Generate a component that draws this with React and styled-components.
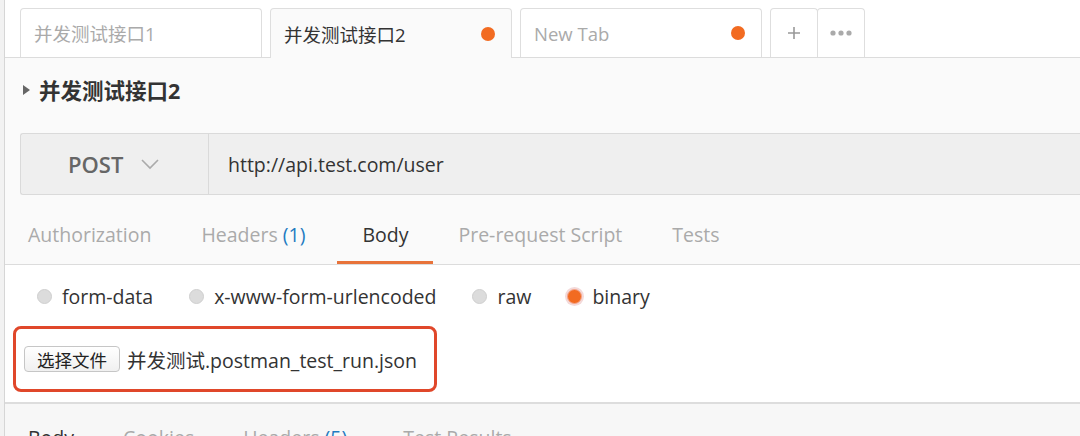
import styled, { createGlobalStyle } from 'styled-components';

const GlobalStyle = createGlobalStyle`
  html, body {
    margin: 0;
    padding: 0;
    background: #f2f2f2;
    font-family: "Open Sans", "Noto Sans CJK SC", sans-serif;
  }
`;

const requestTabs = [
  { label: 'Authorization' },
  { label: 'Headers', count: 1 },
  { label: 'Body', active: true },
  { label: 'Pre-request Script' },
  { label: 'Tests' },
];

const bodyModes = [
  { label: 'form-data' },
  { label: 'x-www-form-urlencoded' },
  { label: 'raw' },
  { label: 'binary', checked: true },
];

const responseTabs = [
  { label: 'Body', active: true },
  { label: 'Cookies' },
  { label: 'Headers', count: 5 },
  { label: 'Test Results' },
];

const App = () => {
  return (
    <>
      <GlobalStyle />
      <Page>
        {/* 상단 탭 */}
        <TabBar>
          <Tab>
            <TabTitle>并发测试接口1</TabTitle>
          </Tab>
          <Tab active>
            <TabTitle active>并发测试接口2</TabTitle>
            <Dot />
          </Tab>
          <Tab>
            <TabTitle>New Tab</TabTitle>
            <Dot />
          </Tab>
          <IconTabs>
            <IconTab>
              <svg width="14" height="14" viewBox="0 0 14 14">
                <path d="M7 1v12M1 7h12" stroke="#999" strokeWidth="1.6" />
              </svg>
            </IconTab>
            <IconTab>
              <svg width="24" height="8" viewBox="0 0 24 8">
                <circle cx="4" cy="4" r="2.6" fill="#aaa" />
                <circle cx="12" cy="4" r="2.6" fill="#aaa" />
                <circle cx="20" cy="4" r="2.6" fill="#aaa" />
              </svg>
            </IconTab>
          </IconTabs>
        </TabBar>

        <Builder>
          <TitleRow>
            <Caret />
            <RequestName>并发测试接口2</RequestName>
          </TitleRow>

          <UrlBar>
            <Method>
              POST
              <svg width="20" height="12" viewBox="0 0 20 12">
                <path d="M2 2l8 8 8-8" stroke="#aaa" strokeWidth="1.6" fill="none" />
              </svg>
            </Method>
            <UrlText>http://api.test.com/user</UrlText>
          </UrlBar>

          <SubTabs>
            {requestTabs.map((t) => (
              <SubTab key={t.label} active={t.active}>
                {t.label}
                {t.count !== undefined && <Count> ({t.count})</Count>}
              </SubTab>
            ))}
          </SubTabs>
        </Builder>

        <BodyPanel>
          <RadioRow>
            {bodyModes.map((m) => (
              <RadioItem key={m.label}>
                <Radio checked={m.checked} />
                {m.label}
              </RadioItem>
            ))}
          </RadioRow>
          <Highlight>
            <FileButton>选择文件</FileButton>
            <FileName>并发测试.postman_test_run.json</FileName>
          </Highlight>
        </BodyPanel>

        <Response>
          {responseTabs.map((t) => (
            <ResponseTab key={t.label} active={t.active}>
              {t.label}
              {t.count !== undefined && <Count> ({t.count})</Count>}
            </ResponseTab>
          ))}
        </Response>
      </Page>
    </>
  );
};

export default App;

const Page = styled.div`
  margin-left: 4px;
  border-left: 1px solid #d6d6d6;
  height: 436px;
  overflow: hidden;
  display: flex;
  flex-direction: column;
  background: #fafafa;

  & > * {
    flex-shrink: 0;
  }
`;

const TabBar = styled.div`
  height: 58px;
  box-sizing: border-box;
  display: flex;
  align-items: flex-end;
  gap: 8px;
  padding-left: 15px;
  background: #ffffff;
  border-bottom: 1px solid #dcdcdc;
`;

const Tab = styled.div`
  width: 242px;
  box-sizing: border-box;
  display: flex;
  align-items: center;
  justify-content: space-between;
  padding: 0 16px 0 13px;
  border: 1px solid #dedede;
  border-bottom: none;
  border-radius: 4px 4px 0 0;
  background: ${(props) => (props.active ? '#fafafa' : '#ffffff')};
  margin-bottom: ${(props) => (props.active ? '-1px' : '0')};
  height: ${(props) => (props.active ? '50px' : '49px')};
`;

const TabTitle = styled.span`
  font-size: 18.5px;
  color: ${(props) => (props.active ? '#333' : '#aaa')};
`;

const Dot = styled.span`
  width: 14px;
  height: 14px;
  border-radius: 50%;
  background: #f26b21;
`;

const IconTabs = styled.div`
  display: flex;
`;

const IconTab = styled.div`
  width: 48px;
  height: 49px;
  box-sizing: border-box;
  display: flex;
  align-items: center;
  justify-content: center;
  border: 1px solid #dedede;
  border-bottom: none;
  border-radius: 4px 4px 0 0;
  background: #ffffff;
  & + & {
    margin-left: -1px;
  }
`;

const Builder = styled.div`
  display: flex;
  flex-direction: column;
  padding-left: 15px;
  border-bottom: 1px solid #dcdcdc;
`;

const TitleRow = styled.div`
  height: 75px;
  box-sizing: border-box;
  display: flex;
  align-items: center;
  gap: 9px;
  padding: 0 0 12px 3px;
`;

const Caret = styled.span`
  width: 0;
  height: 0;
  border-top: 5px solid transparent;
  border-bottom: 5px solid transparent;
  border-left: 7px solid #666;
`;

const RequestName = styled.span`
  font-size: 21.5px;
  font-weight: 700;
  color: #333;
`;

const UrlBar = styled.div`
  height: 62px;
  box-sizing: border-box;
  display: flex;
  align-items: stretch;
  background: #efefef;
  border: 1px solid #dadada;
  border-right: none;
  border-radius: 3px 0 0 3px;
`;

const Method = styled.div`
  width: 188px;
  box-sizing: border-box;
  display: flex;
  align-items: center;
  gap: 17px;
  padding-left: 47px;
  border-right: 1px solid #dadada;
  font-size: 22px;
  font-weight: 600;
  color: #666;
`;

const UrlText = styled.div`
  display: flex;
  align-items: center;
  padding-left: 19px;
  font-size: 19.5px;
  color: #333;
`;

const SubTabs = styled.div`
  height: 69px;
  display: flex;
  align-items: flex-end;
`;

const SubTab = styled.div`
  height: 56px;
  box-sizing: border-box;
  display: flex;
  align-items: center;
  padding: 0 25px;
  font-size: 19.5px;
  color: ${(props) => (props.active ? '#333' : '#aaa')};
  border-bottom: 3px solid ${(props) => (props.active ? '#e8733a' : 'transparent')};
  &:first-child {
    padding-left: 8px;
  }
`;

const Count = styled.span`
  color: #1f7bc1;
  white-space: pre;
  margin-right: 7px;
`;

const BodyPanel = styled.div`
  background: #ffffff;
  padding: 18px 0 10px 8px;
  border-bottom: 2px solid #dddddd;
  display: flex;
  flex-direction: column;
  gap: 16px;
`;

const RadioRow = styled.div`
  display: flex;
  gap: 36px;
  padding-left: 24px;
`;

const RadioItem = styled.label`
  display: flex;
  align-items: center;
  gap: 10px;
  font-size: 19.5px;
  color: #333;
`;

const Radio = styled.span`
  width: 15px;
  height: 15px;
  box-sizing: border-box;
  border-radius: 50%;
  background: ${(props) => (props.checked ? '#f26b21' : '#dcdcdc')};
  border: 1px solid ${(props) => (props.checked ? '#f5a48a' : '#cfcfcf')};
  box-shadow: ${(props) => (props.checked ? '0 0 0 2px #f3d9d9' : 'none')};
`;

const Highlight = styled.div`
  width: 424px;
  height: 66px;
  box-sizing: border-box;
  display: flex;
  align-items: center;
  gap: 7px;
  padding-left: 8px;
  border: 3px solid #e0472a;
  border-radius: 8px;
`;

const FileButton = styled.div`
  width: 96px;
  height: 26px;
  box-sizing: border-box;
  display: flex;
  align-items: center;
  justify-content: center;
  border: 1px solid #c6c6c6;
  border-radius: 4px;
  background: linear-gradient(#ffffff, #f0f0f0);
  font-size: 17.5px;
  color: #222;
`;

const FileName = styled.span`
  font-size: 19.5px;
  color: #333;
`;

const Response = styled.div`
  flex: 1;
  display: flex;
  gap: 49px;
  padding: 20px 0 0 23px;
  background: #f7f7f7;
`;

const ResponseTab = styled.div`
  font-size: 19.5px;
  color: ${(props) => (props.active ? '#333' : '#aaa')};
`;
